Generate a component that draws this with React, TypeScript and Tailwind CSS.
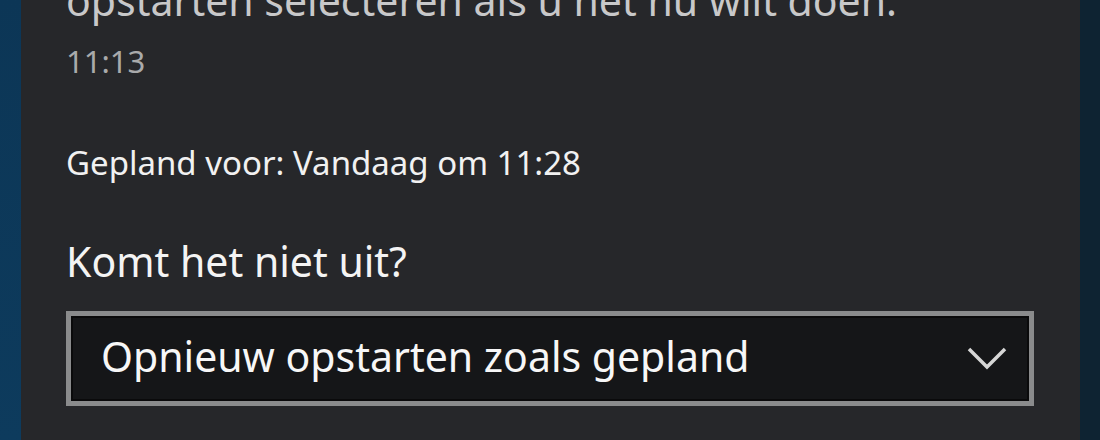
import React from "react";

const font = { fontFamily: '"Noto Sans", "Open Sans", sans-serif' };

export default function App() {
  return (
    <div className="flex h-[440px] w-[1100px] overflow-hidden bg-[#0e2332]" style={font}>
      <div className="w-[21px] shrink-0 bg-gradient-to-b from-[#0c3656] to-[#0d3b5d]" />
      <div className="flex w-[1059px] shrink-0 flex-col bg-[#26272a] pl-[45px] pr-[46px]">
        <p className="-mt-[20px] whitespace-nowrap text-[41px] leading-none text-[#c8c8c9]">
          opstarten selecteren als u het nu wilt doen.
        </p>
        <p className="mt-[25px] text-[31px] leading-none text-[#a9aaab]">11:13</p>
        <p className="mt-[69px] text-[33px] leading-none text-[#f1f1f1]">Gepland voor: Vandaag om 11:28</p>
        <p className="mt-[62px] text-[41px] leading-none text-[#f4f4f4]">Komt het niet uit?</p>
        <div className="mt-[29px] flex h-[95px] w-[968px] items-center justify-between border-[5px] border-[#8a8b8c] bg-[#151618] pb-1 pl-[30px] pr-[22px] shadow-[inset_0_0_0_2px_#0a0a0b]">
          <span className="text-[41px] leading-none text-[#f7f7f7]">Opnieuw opstarten zoals gepland</span>
          <svg width="40" height="24" viewBox="0 0 40 24" fill="none" className="mt-[3px] text-[#d6d6d6]">
            <path d="M2 3 L20 21 L38 3" stroke="currentColor" strokeWidth="3.5" />
          </svg>
        </div>
      </div>
    </div>
  );
}
